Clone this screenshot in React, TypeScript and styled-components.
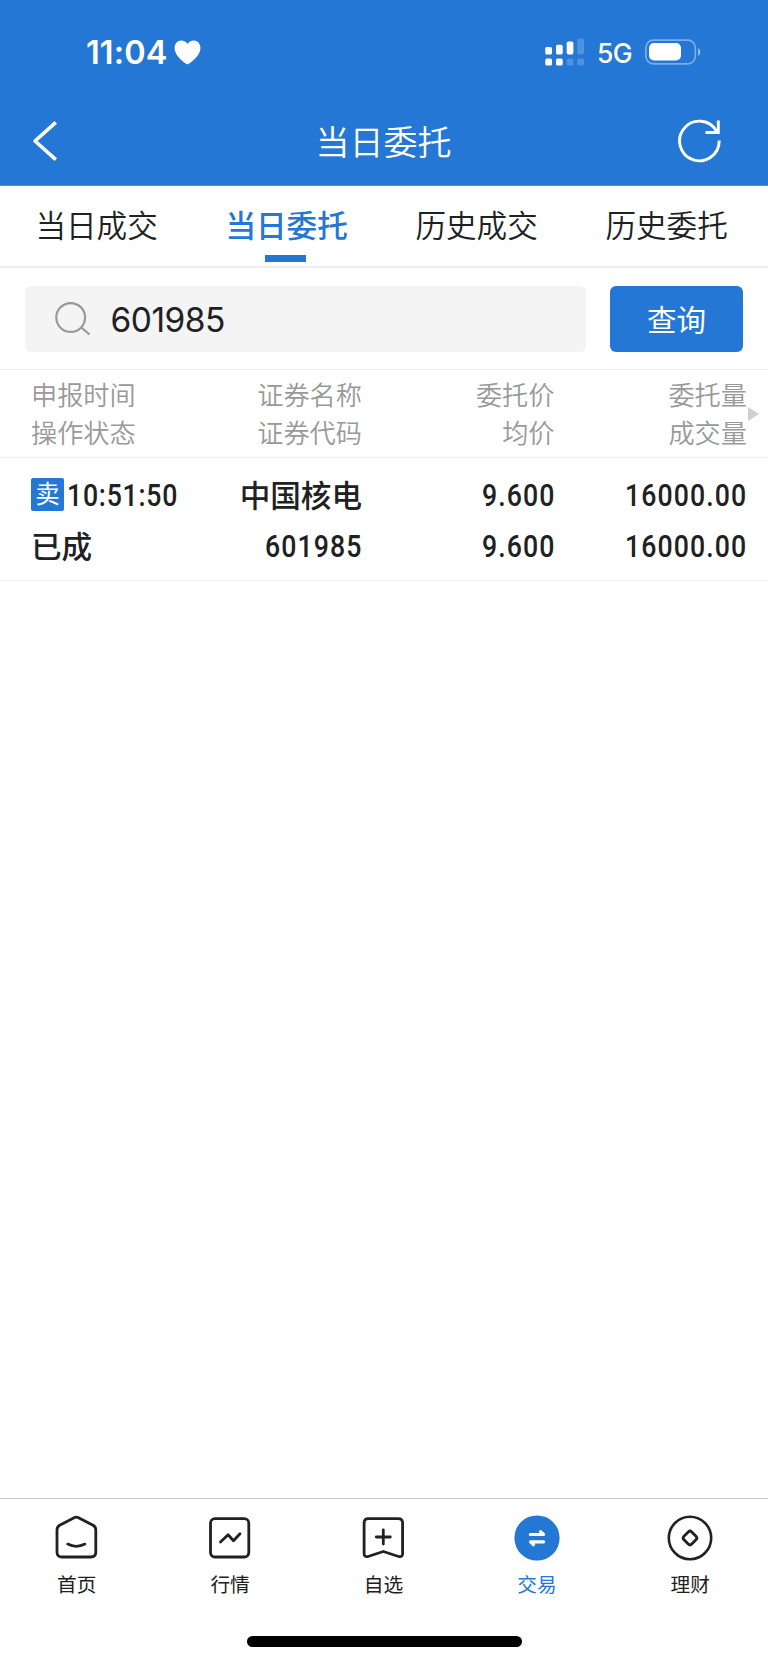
import React from 'react';
import styled, { createGlobalStyle } from 'styled-components';

const BLUE = '#2477d5';
const INK = '#202122';
const CJK = "'Noto Sans CJK SC', sans-serif";

const GlobalStyle = createGlobalStyle`
  * { box-sizing: border-box; }
  body { margin: 0; background: #fff; font-family: ${CJK}; color: ${INK}; }
  button { font: inherit; border: 0; padding: 0; background: none; color: inherit; }
  svg { display: block; flex: none; }
`;

const Screen = styled.div`
  display: flex;
  flex-direction: column;
  width: 768px;
  height: 1663px;
  overflow: hidden;
  background: #fff;
`;

const TopArea = styled.header`
  height: 186px;
  background: ${BLUE};
  color: #fff;
  border-bottom: 1px solid #4a90de;
`;

const StatusBar = styled.div`
  display: flex;
  justify-content: space-between;
  align-items: center;
  height: 104px;
  padding: 0 67px 0 86px;
`;

const StatusGroup = styled.div`
  display: flex;
  align-items: center;
`;

const Clock = styled.span`
  width: 88px;
  margin-top: 2px;
  font: 600 32.5px/40px Inter, sans-serif;
  letter-spacing: 0.1px;
`;

const Network = styled.span`
  width: 48px;
  margin: 2px 0 0 12px;
  font: 500 26.5px/32px Inter, sans-serif;
  letter-spacing: -0.6px;
`;

const TitleBar = styled.div`
  display: flex;
  justify-content: space-between;
  align-items: center;
  height: 74px;
  padding: 0 46px 0 32px;
`;

const Title = styled.h1`
  margin: -1px 0 0 31px;
  font-size: 34px;
  line-height: 48px;
  font-weight: 350;
`;

const Tabs = styled.nav`
  display: flex;
  height: 82px;
  padding: 0 6px 0 1.6px;
  border-bottom: 2px solid #efefef;
`;

const Tab = styled.button<{ $active?: boolean }>`
  display: flex;
  flex-direction: column;
  align-items: center;
  width: 190px;
  padding-top: 17px;
  font-size: 30.6px;
  line-height: 42px;
  font-weight: ${p => (p.$active ? 500 : 350)};
  color: ${p => (p.$active ? BLUE : '#202122')};
  &::after {
    content: '';
    width: 41px;
    height: 7px;
    margin-top: 10px;
    margin-right: 3px;
    background: ${p => (p.$active ? BLUE : 'transparent')};
  }
`;

const SearchBar = styled.div`
  display: flex;
  justify-content: space-between;
  height: 102px;
  padding: 18px 25px 0;
  border-bottom: 1px solid #efefef;
`;

const SearchField = styled.div`
  display: flex;
  align-items: center;
  width: 561px;
  height: 66px;
  padding: 1px 0 0 30px;
  border-radius: 6px;
  background: #f4f4f4;
  font: 400 33.5px/44px Inter, sans-serif;
  letter-spacing: -0.5px;
  gap: 18.5px;
`;

const QueryButton = styled.button`
  width: 133px;
  height: 66px;
  padding-bottom: 2px;
  border-radius: 6px;
  background: ${BLUE};
  color: #fff;
  font-size: 29.5px;
  line-height: 44px;
`;

const Columns = styled.div`
  display: grid;
  grid-template-columns: 170px 161px 192.5px 192.5px;
  padding-left: 31px;
`;

const TableHead = styled(Columns)`
  position: relative;
  height: 88px;
  padding-top: 5px;
  border-bottom: 1px solid #f1f1f1;
  color: #999;
  font-size: 26.2px;
  line-height: 38px;
  font-weight: 350;
`;

const TableRow = styled(Columns)`
  height: 123px;
  padding-top: 11px;
  border-bottom: 1px solid #f1f1f1;
  font-size: 30.6px;
  line-height: 51px;
  font-weight: 500;
`;

const Cell = styled.div<{ $left?: boolean }>`
  display: flex;
  flex-direction: column;
  align-items: ${p => (p.$left ? 'flex-start' : 'flex-end')};
  white-space: nowrap;
`;

const Line = styled.div`
  display: flex;
  align-items: center;
  height: 1lh;
`;

const Num = styled.span<{ $left?: boolean }>`
  padding-top: 2px;
  font-family: Roboto, sans-serif;
  font-size: 31px;
  line-height: 50px;
  font-weight: 500;
  letter-spacing: ${p => (p.$left ? 0.9 : 1.3)}px;
  margin-right: -0.7px;
  transform: scaleX(0.86);
  transform-origin: ${p => (p.$left ? 'left' : 'right')} center;
`;

const SellBadge = styled.span`
  width: 33px;
  height: 33px;
  margin-right: 3px;
  border-radius: 2px;
  background: ${BLUE};
  color: #fff;
  font-size: 24.5px;
  line-height: 30px;
  font-weight: 400;
  text-align: center;
`;

const ScrollHint = styled.span`
  position: absolute;
  right: 9px;
  top: 37px;
  border: 7px solid transparent;
  border-left: 11px solid #d0d0d0;
  border-right: 0;
`;

const Body = styled.main`
  flex: 1;
`;

const BottomNav = styled.nav`
  display: grid;
  grid-template-columns: repeat(5, 1fr);
  height: 126px;
  padding: 16px 1px 0 0;
  border-top: 1px solid #c9c9c9;
`;

const NavItem = styled.button<{ $active?: boolean }>`
  display: flex;
  flex-direction: column;
  align-items: center;
  font-size: 19.7px;
  line-height: 28px;
  gap: 9px;
  color: ${p => (p.$active ? BLUE : INK)};
`;

const HomeArea = styled.div`
  display: flex;
  justify-content: center;
  height: 39px;
  padding-top: 12px;
`;

const HomeIndicator = styled.div`
  width: 275px;
  height: 10.5px;
  border-radius: 6px;
  background: #000;
`;

const Heart = () => (
  <svg width="27" height="26" viewBox="0 0 27 26" fill="#fff">
    <path d="M13.5 25.500C12.8 25.500 .6 18 .6 9.100.6 4.500 3.500 1.500 7.200 1.500 10 1.500 12.200 2.800 13.500 5.100 14.800 2.800 17 1.500 19.800 1.500c3.700 0 6.600 3 6.600 7.600C26.400 18 14.200 25.500 13.500 25.500Z" />
  </svg>
);

const Signal = () => (
  <svg width="40" height="28" viewBox="0 0 40 28" fill="#fff">
    <rect x="0.300" y="9" width="6.700" height="7.500" rx="1.500" />
    <rect x="11" y="6.700" width="6.700" height="9.800" rx="1.500" />
    <rect x="21.700" y="3.500" width="6.700" height="13" rx="1.700" />
    <rect x="32.300" y="0.500" width="6.700" height="16" rx="1.700" opacity="0.200" />
    <rect x="0.300" y="20.500" width="6.700" height="7" rx="1.500" />
    <rect x="11" y="20.500" width="6.700" height="7" rx="1.500" />
    <rect x="21.700" y="20.500" width="6.700" height="7" rx="1.500" opacity="0.200" />
    <rect x="32.300" y="20.500" width="6.700" height="7" rx="1.500" opacity="0.200" />
  </svg>
);

const Battery = () => (
  <svg width="56" height="26" viewBox="0 0 56 26" fill="none">
    <rect x="0.900" y="1.200" width="49.400" height="23.600" rx="7.500" stroke="#fff" strokeOpacity="0.400" strokeWidth="1.700" />
    <rect x="4" y="4" width="32" height="17.500" rx="5" fill="#fff" />
    <path d="M53 9c3 1.300 3 6.500 0 7.800Z" fill="#fff" fillOpacity="0.500" />
  </svg>
);

const BackIcon = () => (
  <svg width="26" height="42" viewBox="0 0 26 42" fill="none" stroke="#fff" strokeWidth="3.600">
    <path d="M23.800 2.300 3 21l20.800 18.700" strokeLinejoin="round" />
  </svg>
);

const RefreshIcon = () => (
  <svg width="44" height="44" viewBox="0 0 44 44" fill="none" stroke="#fff" strokeWidth="2.900">
    <path d="M41.200 21.500A19.800 19.800 0 1 1 38.800 12.500" />
    <path d="M40.300 1.500V13.500H27.500" />
  </svg>
);

const SearchIcon = () => (
  <svg width="37" height="36" viewBox="0 0 37 36" fill="none" stroke="#999" strokeWidth="2.200">
    <circle cx="15.700" cy="15.500" r="14.400" />
    <path d="M26.300 25.500 34.500 32.500" strokeWidth="2.300" />
  </svg>
);

const icon = {
  width: 46,
  height: 46,
  viewBox: '0 0 46 46',
  fill: 'none',
  stroke: INK,
  strokeWidth: 2.8,
  strokeLinecap: 'round' as const,
  strokeLinejoin: 'round' as const,
};

const HomeIcon = () => (
  <svg {...icon}>
    <path d="M20.600 2.500q1.700-.8 3.400 0L39.100 10.300q2.700 1.500 2.700 4.700V37q0 5-5 5H8q-5 0-5-5V15q0-3.200 2.700-4.700Z" />
    <path d="M13.700 29.100q8.600 4.500 17.200 0" />
  </svg>
);

const MarketIcon = () => (
  <svg {...icon}>
    <rect x="3.500" y="3.700" width="38.300" height="38.300" rx="4.500" />
    <path d="m13.500 27 7.600-7.300 5.400 6 6.500-7" />
  </svg>
);

const WatchIcon = () => (
  <svg {...icon}>
    <path d="M8.300 3.700H38.300q4.300 0 4.300 4.300V38.500q0 4-4 3L23.300 36.500 8.100 41.500q-4 1-4-3V8q0-4.300 4.200-4.300Z" />
    <path d="M16.300 22h14M23.300 15v14" />
  </svg>
);

const TradeIcon = () => (
  <svg {...icon} stroke="#fff" strokeWidth="3.200">
    <circle cx="23" cy="23" r="22.600" fill={BLUE} stroke="none" />
    <path d="M16.300 19.500H29.500L26.500 16.600M29.700 26.800H16.500L19.500 29.700" />
  </svg>
);

const FinanceIcon = () => (
  <svg {...icon}>
    <circle cx="23" cy="23" r="21.200" strokeWidth="2.600" />
    <rect x="17.500" y="17.500" width="11" height="11" rx="2.500" transform="rotate(45 23 23)" />
  </svg>
);

const heads = [
  ['申报时间', '操作状态'],
  ['证券名称', '证券代码'],
  ['委托价', '均价'],
  ['委托量', '成交量'],
];

const tabs = ['当日成交', '当日委托', '历史成交', '历史委托'];

const navItems = [
  { label: '首页', Icon: HomeIcon },
  { label: '行情', Icon: MarketIcon },
  { label: '自选', Icon: WatchIcon },
  { label: '交易', Icon: TradeIcon },
  { label: '理财', Icon: FinanceIcon },
];

export default function App() {
  return (
    <Screen>
      <GlobalStyle />
      <TopArea>
        <StatusBar>
          <StatusGroup>
            <Clock>11:04</Clock>
            <Heart />
          </StatusGroup>
          <StatusGroup>
            <Signal />
            <Network>5G</Network>
            <Battery />
          </StatusGroup>
        </StatusBar>
        <TitleBar>
          <BackIcon />
          <Title>当日委托</Title>
          <RefreshIcon />
        </TitleBar>
      </TopArea>
      <Tabs>
        {tabs.map((t, i) => (
          <Tab key={t} $active={i === 1}>{t}</Tab>
        ))}
      </Tabs>
      <SearchBar>
        <SearchField>
          <SearchIcon />
          601985
        </SearchField>
        <QueryButton>查询</QueryButton>
      </SearchBar>
      <TableHead>
        {heads.map(([a, b], i) => (
          <Cell key={a} $left={i === 0}>
            <Line>{a}</Line>
            <Line>{b}</Line>
          </Cell>
        ))}
        <ScrollHint />
      </TableHead>
      <TableRow>
        <Cell $left>
          <Line>
            <SellBadge>卖</SellBadge>
            <Num $left>10:51:50</Num>
          </Line>
          <Line>已成</Line>
        </Cell>
        <Cell>
          <Line>中国核电</Line>
          <Line><Num>601985</Num></Line>
        </Cell>
        <Cell>
          <Line><Num>9.600</Num></Line>
          <Line><Num>9.600</Num></Line>
        </Cell>
        <Cell>
          <Line><Num>16000.00</Num></Line>
          <Line><Num>16000.00</Num></Line>
        </Cell>
      </TableRow>
      <Body />
      <BottomNav>
        {navItems.map(({ label, Icon }, i) => (
          <NavItem key={label} $active={i === 3}>
            <Icon />
            {label}
          </NavItem>
        ))}
      </BottomNav>
      <HomeArea>
        <HomeIndicator />
      </HomeArea>
    </Screen>
  );
}
